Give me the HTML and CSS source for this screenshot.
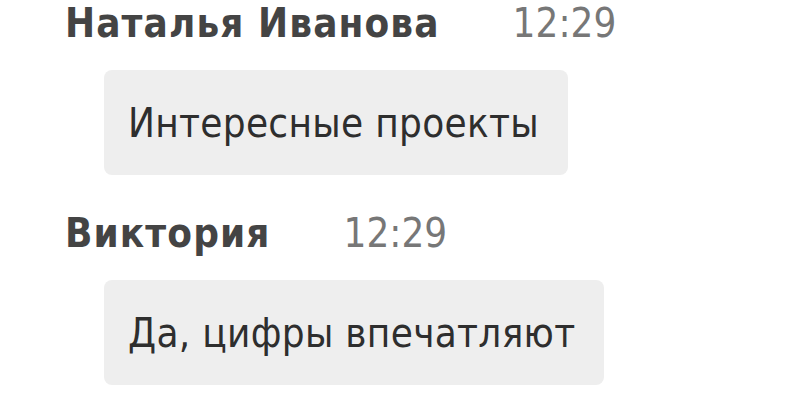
FILE: index.html
```html
<!DOCTYPE html>
<html lang="ru">
<head>
    <meta charset="UTF-8">
    <meta name="viewport" content="width=device-width, initial-scale=1.0">
    <title>Чат</title>
    <link rel="stylesheet" href="styles.css">
</head>
<body>
    <div class="chat">
        <div class="message">
            <div class="message-head">
                <span class="author">Наталья Иванова</span>
                <span class="time">12:29</span>
            </div>
            <div class="bubble">Интересные проекты</div>
        </div>
        <div class="message">
            <div class="message-head">
                <span class="author">Виктория</span>
                <span class="time">12:29</span>
            </div>
            <div class="bubble">Да, цифры впечатляют</div>
        </div>
    </div>
</body>
</html>
```

FILE: styles.css
```css
 body {
     font-family: "DejaVu Sans Condensed", "DejaVu Sans", sans-serif;
     font-size: 40px;
     line-height: 46px;
     margin: 0;
     padding: 0;
     background: #ffffff;
 }
 .chat {
     display: flex;
     flex-direction: column;
     gap: 35px;
 }
 .message {
     display: flex;
     flex-direction: column;
     align-items: flex-start;
 }
 .message-head {
     display: flex;
     align-items: baseline;
     gap: 73px;
     padding-left: 65px;
 }
 .author {
     font-weight: bold;
     color: #444444;
     letter-spacing: 1.1px;
 }
 .time {
     color: #777777;
 }
 .bubble {
     margin: 24px 0 0 104px;
     padding: 30px 29px 29px 24px;
     background-color: #eeeeee;
     border-radius: 8px;
     color: #2e2e2e;
     letter-spacing: 0.3px;
 }
```
